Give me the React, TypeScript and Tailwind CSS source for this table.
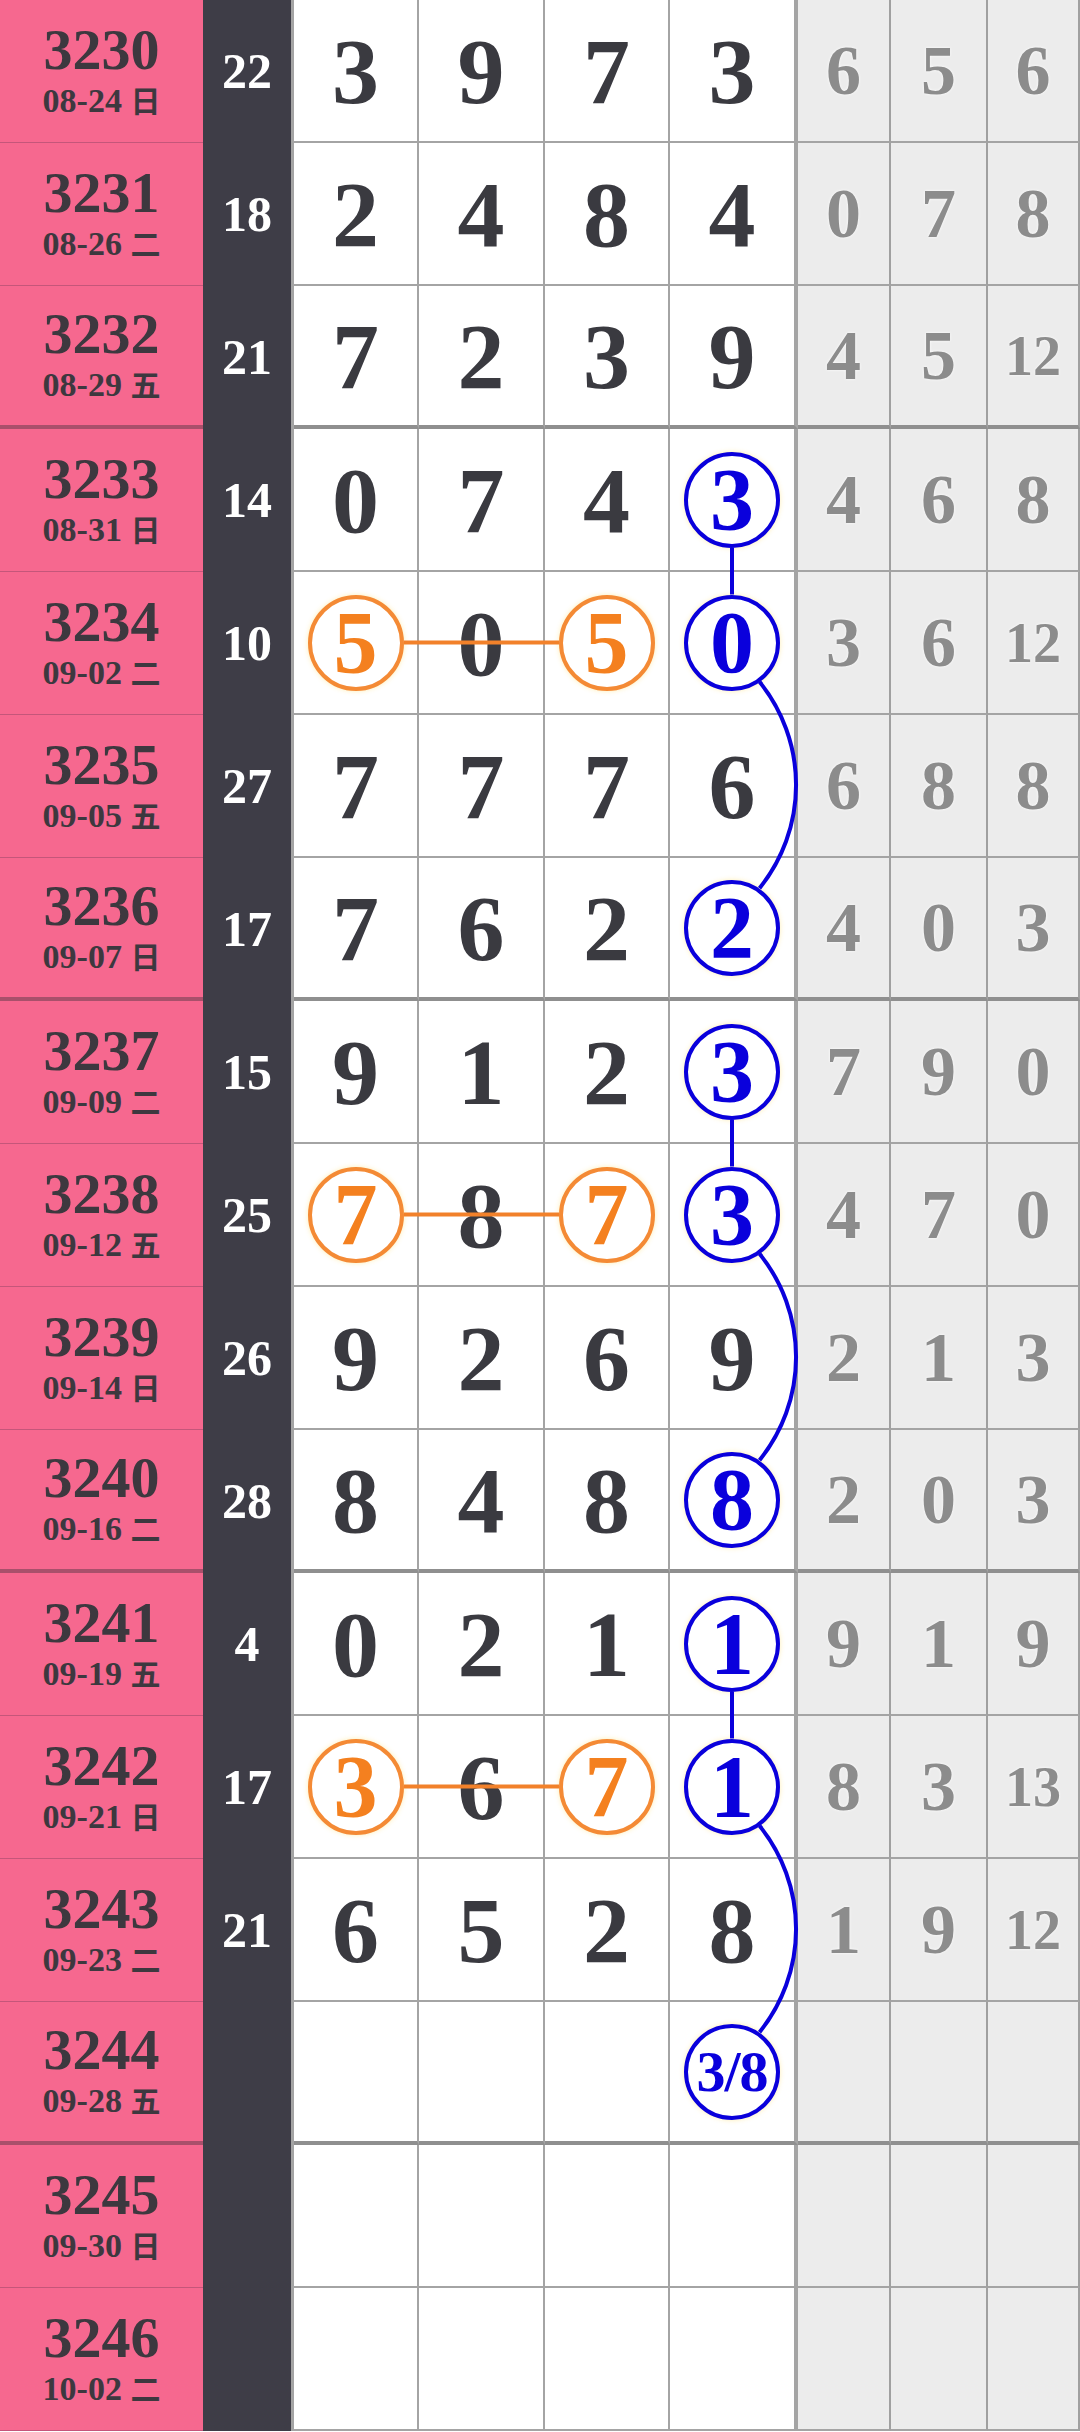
import React from "react";

type Row = {
  no: string;
  date: string;
  wd: string;
  sum: string;
  d: string[];
  m: string[];
};

const rows: Row[] = [
  { no: "3230", date: "08-24", wd: "日", sum: "22", d: ["3", "9", "7", "3"], m: ["6", "5", "6"] },
  { no: "3231", date: "08-26", wd: "二", sum: "18", d: ["2", "4", "8", "4"], m: ["0", "7", "8"] },
  { no: "3232", date: "08-29", wd: "五", sum: "21", d: ["7", "2", "3", "9"], m: ["4", "5", "12"] },
  { no: "3233", date: "08-31", wd: "日", sum: "14", d: ["0", "7", "4", "3"], m: ["4", "6", "8"] },
  { no: "3234", date: "09-02", wd: "二", sum: "10", d: ["5", "0", "5", "0"], m: ["3", "6", "12"] },
  { no: "3235", date: "09-05", wd: "五", sum: "27", d: ["7", "7", "7", "6"], m: ["6", "8", "8"] },
  { no: "3236", date: "09-07", wd: "日", sum: "17", d: ["7", "6", "2", "2"], m: ["4", "0", "3"] },
  { no: "3237", date: "09-09", wd: "二", sum: "15", d: ["9", "1", "2", "3"], m: ["7", "9", "0"] },
  { no: "3238", date: "09-12", wd: "五", sum: "25", d: ["7", "8", "7", "3"], m: ["4", "7", "0"] },
  { no: "3239", date: "09-14", wd: "日", sum: "26", d: ["9", "2", "6", "9"], m: ["2", "1", "3"] },
  { no: "3240", date: "09-16", wd: "二", sum: "28", d: ["8", "4", "8", "8"], m: ["2", "0", "3"] },
  { no: "3241", date: "09-19", wd: "五", sum: "4", d: ["0", "2", "1", "1"], m: ["9", "1", "9"] },
  { no: "3242", date: "09-21", wd: "日", sum: "17", d: ["3", "6", "7", "1"], m: ["8", "3", "13"] },
  { no: "3243", date: "09-23", wd: "二", sum: "21", d: ["6", "5", "2", "8"], m: ["1", "9", "12"] },
  { no: "3244", date: "09-28", wd: "五", sum: "", d: ["", "", "", "3/8"], m: ["", "", ""] },
  { no: "3245", date: "09-30", wd: "日", sum: "", d: ["", "", "", ""], m: ["", "", ""] },
  { no: "3246", date: "10-02", wd: "二", sum: "", d: ["", "", "", ""], m: ["", "", ""] },
];

const ROW_H = 143;
const thick = [2, 6, 10, 14];
const blueRows = [3, 4, 6, 7, 8, 10, 11, 12, 14];
const orangeRows = [4, 8, 12];

const whiteW = ["w-[125px]", "w-[126px]", "w-[125px]", "w-[128px] border-r-4 border-r-[#8f8f8f]"];
const greyW = ["w-[93px]", "w-[97px]", "w-[92px]"];

// centres of the circles, used by the overlay lines
const colX = [356, 481, 607, 732];
const rowY = (i: number) => i * ROW_H + (thick.includes(i) ? 69.5 : 70.5);
const R = 48;

function Circle({ v, tone }: { v: string; tone: "blue" | "orange" }) {
  const small = v.length > 1;
  return (
    <div
      className={
        "flex h-[96px] w-[96px] items-center justify-center rounded-full border-4 bg-white shadow-[0_0_5px_rgba(255,236,170,0.9)] " +
        (tone === "blue" ? "border-[#0a00dc] text-[#0a00dc]" : "border-[#f48a35] text-[#f4801f]")
      }
    >
      <span className={small ? "text-[58px] leading-none tracking-[-1px]" : "text-[88px] leading-none"}>{v}</span>
    </div>
  );
}

function Links() {
  const arcs: [number, number][] = [
    [4, 6],
    [8, 10],
    [12, 14],
  ];
  const straights: [number, number][] = [
    [3, 4],
    [7, 8],
    [11, 12],
  ];
  const dx = R * Math.cos((55 * Math.PI) / 180);
  const dy = R * Math.sin((55 * Math.PI) / 180);
  return (
    <svg className="pointer-events-none absolute left-0 top-0" width={1080} height={2432}>
      {orangeRows.map((r) => (
        <line
          key={"o" + r}
          x1={colX[0] + R}
          y1={rowY(r)}
          x2={colX[2] - R}
          y2={rowY(r)}
          stroke="#f2812a"
          strokeWidth={4}
        />
      ))}
      {straights.map(([a, b]) => (
        <line key={"s" + a} x1={colX[3]} y1={rowY(a) + R} x2={colX[3]} y2={rowY(b) - R} stroke="#0a00dc" strokeWidth={4} />
      ))}
      {arcs.map(([a, b]) => (
        <path
          key={"a" + a}
          d={`M ${colX[3] + dx} ${rowY(a) + dy} A 164 164 0 0 1 ${colX[3] + dx} ${rowY(b) - dy}`}
          fill="none"
          stroke="#0a00dc"
          strokeWidth={4}
        />
      ))}
    </svg>
  );
}

export default function App() {
  return (
    <div
      className="relative h-[2432px] w-[1080px] overflow-hidden bg-white font-bold"
      style={{ fontFamily: '"Liberation Serif", "Noto Sans CJK TC", serif' }}
    >
      {rows.map((row, i) => {
        const isThick = thick.includes(i);
        const lineB = isThick ? "border-b-4 border-b-[#8f8f8f]" : "border-b-2 border-b-[#a4a4a4]";
        return (
          <div key={row.no} className="flex h-[143px]">
            <div
              className={
                "flex w-[203px] flex-col items-center justify-center bg-[#f6688f] text-[#3d383f] " +
                (isThick ? "border-b-4 border-b-[#a9506b]" : "border-b border-b-[#c5567a]")
              }
            >
              <div className="text-[58px] leading-[56px]">{row.no}</div>
              <div className="mt-[4px] text-[34px] leading-[38px]">
                {row.date} <span className="text-[30px]">{row.wd}</span>
              </div>
            </div>
            <div className="flex w-[91px] items-center justify-center border-r-[3px] border-r-[#a4a4a4] bg-[#3e3d47] text-[50px] text-white">
              {row.sum}
            </div>
            {row.d.map((v, k) => {
              const blue = k === 3 && blueRows.includes(i);
              const orange = (k === 0 || k === 2) && orangeRows.includes(i);
              return (
                <div
                  key={k}
                  className={`flex items-center justify-center border-r-2 border-r-[#a4a4a4] text-[94px] leading-none text-[#3a3a40] ${whiteW[k]} ${lineB}`}
                >
                  {blue ? <Circle v={v} tone="blue" /> : orange ? <Circle v={v} tone="orange" /> : v}
                </div>
              );
            })}
            {row.m.map((v, k) => (
              <div
                key={k}
                className={`flex items-center justify-center border-r-2 border-r-[#a0a0a0] bg-[#ececec] leading-none text-[#8c8c8c] [text-shadow:0_0_3px_#fff] ${greyW[k]} ${lineB} ${v.length > 1 ? "text-[56px]" : "text-[70px]"}`}
              >
                {v}
              </div>
            ))}
          </div>
        );
      })}
      <Links />
    </div>
  );
}
